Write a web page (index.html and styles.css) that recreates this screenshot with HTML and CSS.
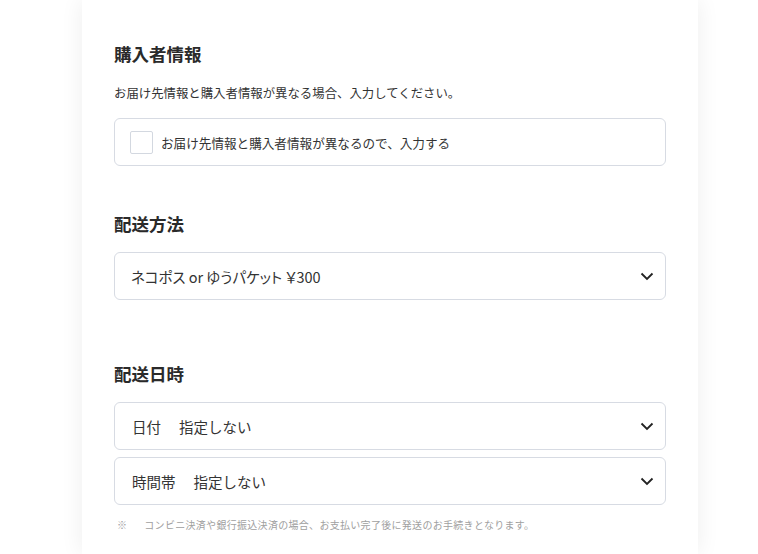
FILE: index.html
```html
<!DOCTYPE HTML>
<html>
    <head>
        <meta charset="UTF-8">
        <title>ご注文手続き</title>
        <link rel="stylesheet" href="styles.css">
    </head>
    <body>
        <div id="wrap">
            <div class="sec buyer">
                <h2>購入者情報</h2>
                <p class="desc">お届け先情報と購入者情報が異なる場合、入力してください。</p>
                <label class="check">
                    <span class="box"></span>
                    <span class="txt">お届け先情報と購入者情報が異なるので、入力する</span>
                </label>
            </div>
            <div class="sec ship">
                <h2>配送方法</h2>
                <div class="sel prop">
                    <span>ネコポス or ゆうパケット ￥300</span>
                    <svg class="arr" width="14" height="9" viewBox="0 0 14 9"><path d="M1.5 1.5 7 7l5.5-5.5" fill="none" stroke="#222" stroke-width="1.8"/></svg>
                </div>
            </div>
            <div class="sec date">
                <h2>配送日時</h2>
                <div class="sel">
                    <span><em>日付</em>指定しない</span>
                    <svg class="arr" width="14" height="9" viewBox="0 0 14 9"><path d="M1.5 1.5 7 7l5.5-5.5" fill="none" stroke="#222" stroke-width="1.8"/></svg>
                </div>
                <div class="sel">
                    <span><em>時間帯</em>指定しない</span>
                    <svg class="arr" width="14" height="9" viewBox="0 0 14 9"><path d="M1.5 1.5 7 7l5.5-5.5" fill="none" stroke="#222" stroke-width="1.8"/></svg>
                </div>
                <p class="note"><i>※</i>コンビニ決済や銀行振込決済の場合、お支払い完了後に発送のお手続きとなります。</p>
            </div>
        </div>
    </body>
</html>
```

FILE: styles.css
```css
body,p,h2{margin:0;}
body{
    background-color:#fff;
    font-family:"Noto Sans CJK JP","Noto Sans",sans-serif;
    color:#333;
}
#wrap{
    box-sizing:border-box;
    width:616px;
    min-height:554px;
    margin-left:82px;
    padding:40px 32px 20px;
    background-color:#fff;
    box-shadow:0 0 22px rgba(0,0,0,0.07);
}
#wrap h2{
    font-size:17.5px;
    line-height:27px;
    font-weight:bold;
    color:#2a2a2a;
}
#wrap .desc{
    margin-top:17px;
    font-size:12.4px;
    line-height:18px;
}
#wrap .check{
    display:flex;
    align-items:center;
    height:48px;
    margin-top:16px;
    padding:0 15px;
    border:1px solid #d7dbe3;
    border-radius:6px;
    box-sizing:border-box;
}
#wrap .check .box{
    width:21px;
    height:21px;
    border:1px solid #d3d8e0;
    border-radius:2px;
}
#wrap .check .txt{
    margin-left:8px;
    font-size:12.6px;
}
#wrap .ship{
    margin-top:44px;
}
#wrap .date{
    margin-top:60px;
}
#wrap .sel{
    display:flex;
    align-items:center;
    justify-content:space-between;
    height:48px;
    margin-top:7px;
    padding:0 11px 0 16px;
    border:1px solid #d7dbe3;
    border-radius:6px;
    box-sizing:border-box;
    font-size:14.5px;
}
#wrap h2 + .sel{
    margin-top:15px;
}
#wrap .sel.prop{
    font-feature-settings:"palt";
}
#wrap .sel em{
    font-style:normal;
    margin-right:18px;
}
#wrap .date .sel em{
    margin-left:1px;
}
#wrap .note{
    margin-top:12px;
    padding-left:3px;
    font-size:10px;
    letter-spacing:0.3px;
    line-height:16px;
    color:#a0a0a0;
}
#wrap .note i{
    font-style:normal;
    margin-right:17px;
}
```
